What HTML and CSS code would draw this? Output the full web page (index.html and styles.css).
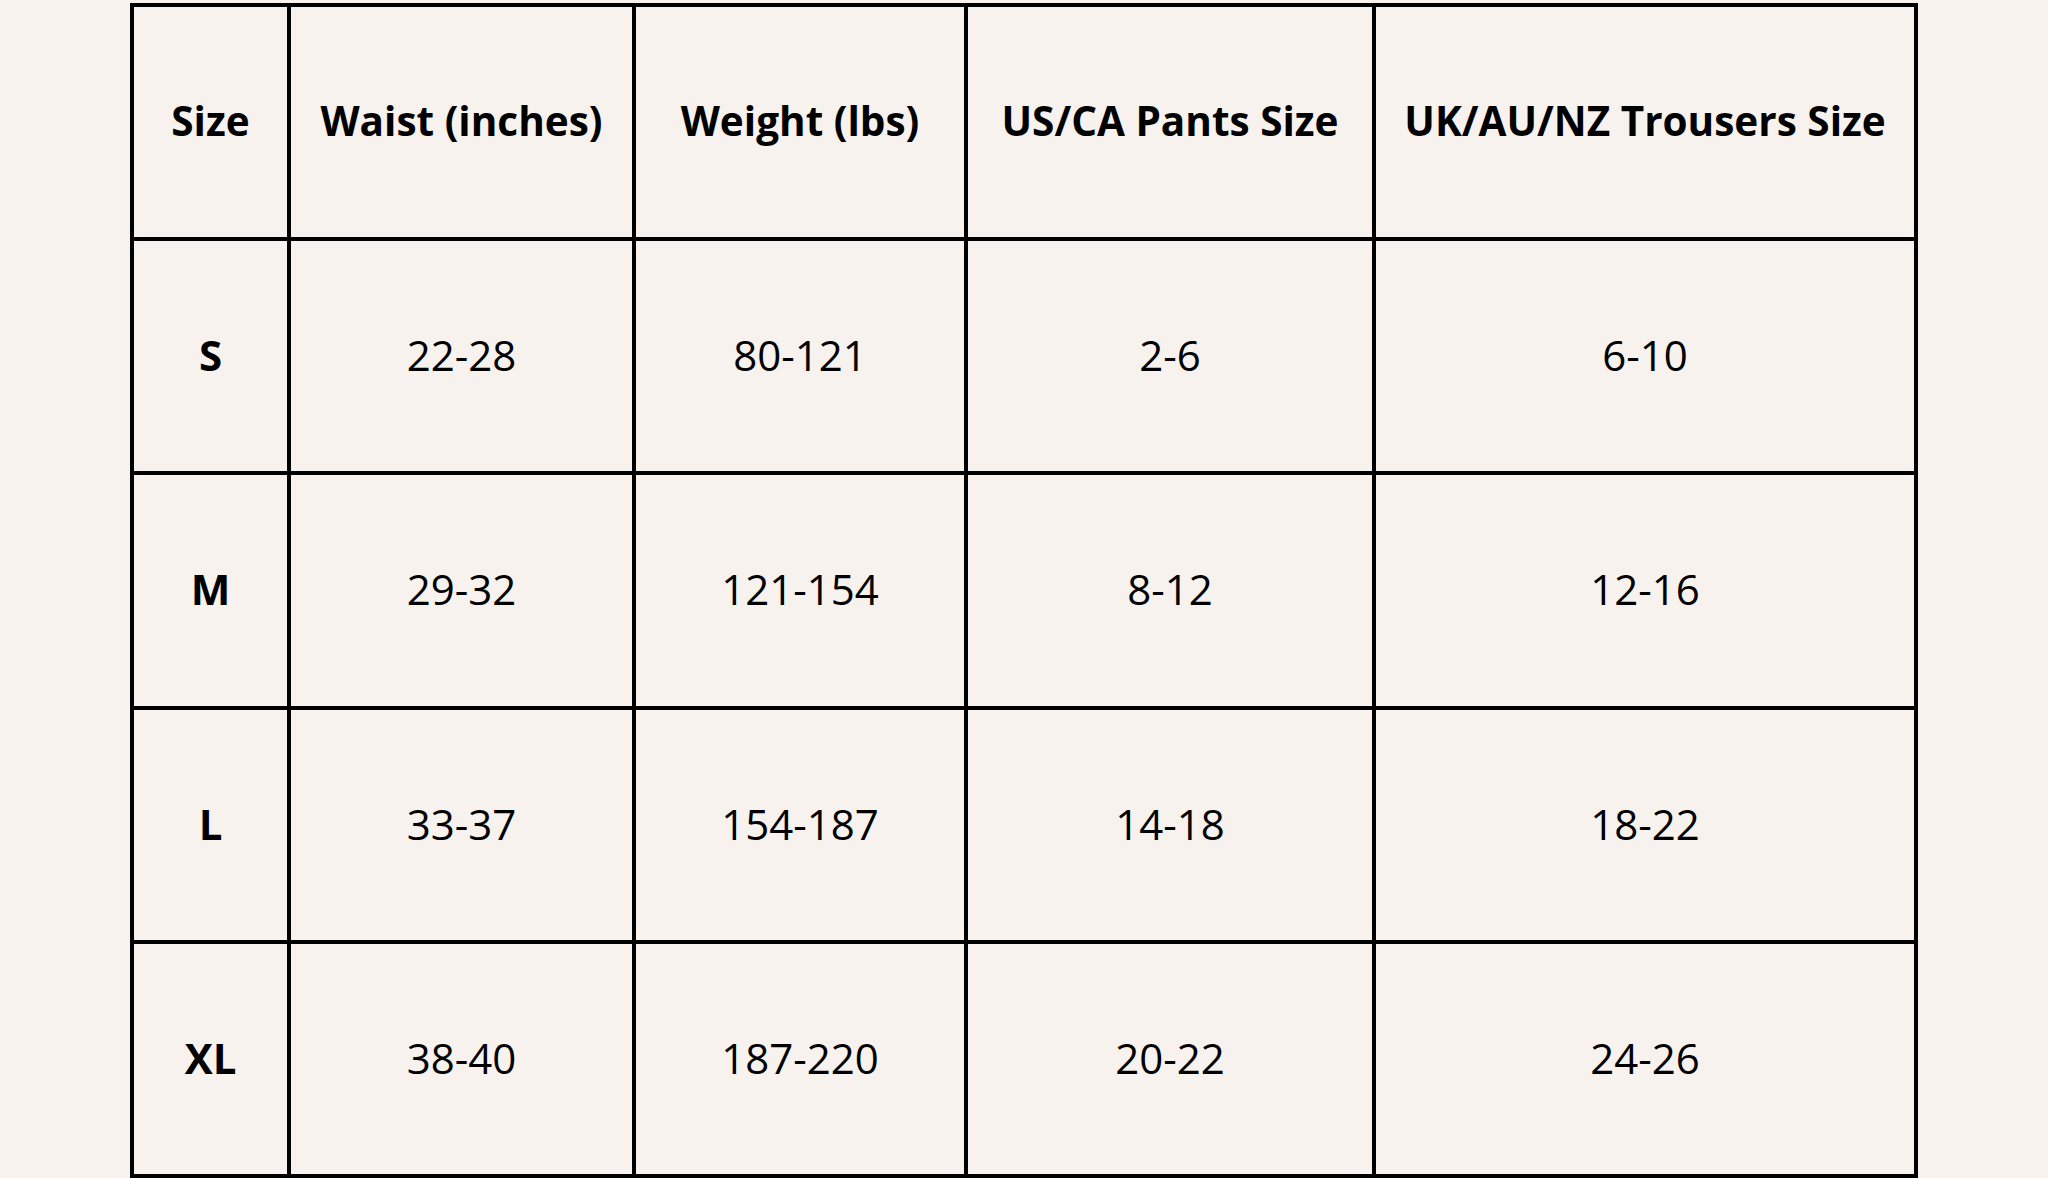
FILE: index.html
```html
<!DOCTYPE html>
<html>
<head>
<meta charset="utf-8">
<link rel="stylesheet" href="styles.css">
</head>
<body>
<main class="page">
  <table class="chart">
    <colgroup>
      <col class="c-size">
      <col class="c-waist">
      <col class="c-weight">
      <col class="c-us">
      <col class="c-uk">
    </colgroup>
    <thead>
      <tr>
        <th>Size</th>
        <th>Waist (inches)</th>
        <th>Weight (lbs)</th>
        <th>US/CA Pants Size</th>
        <th>UK/AU/NZ Trousers Size</th>
      </tr>
    </thead>
    <tbody>
      <tr><th>S</th><td>22-28</td><td>80-121</td><td>2-6</td><td>6-10</td></tr>
      <tr><th>M</th><td>29-32</td><td>121-154</td><td>8-12</td><td>12-16</td></tr>
      <tr><th>L</th><td>33-37</td><td>154-187</td><td>14-18</td><td>18-22</td></tr>
      <tr><th>XL</th><td>38-40</td><td>187-220</td><td>20-22</td><td>24-26</td></tr>
    </tbody>
  </table>
</main>
</body>
</html>
```
FILE: styles.css
```css
html, body {
  margin: 0;
  padding: 0;
  background: #f7f2ee;
}
.page {
  display: flex;
  justify-content: center;
  padding-top: 3px;
  height: 1178px;
  box-sizing: border-box;
  overflow: hidden;
}
.chart {
  table-layout: fixed;
  border-collapse: separate;
  border-spacing: 4px;
  background: #000;
  width: 1788px;
  font-family: "Open Sans", "Noto Sans", sans-serif;
  color: #000;
}
.c-size { width: 153px; }
.c-waist { width: 341px; }
.c-weight { width: 328px; }
.c-us { width: 404px; }
.c-uk { width: 538px; }
.chart th, .chart td {
  background: #f7f2ee;
  height: 230px;
  padding: 0 0 3px;
  box-sizing: border-box;
  text-align: center;
  vertical-align: middle;
  font-size: 42px;
  white-space: nowrap;
}
.chart th {
  font-weight: 700;
}
.chart thead th {
  font-size: 40.5px;
  padding-bottom: 4px;
}
.chart td {
  font-weight: 400;
}
```
